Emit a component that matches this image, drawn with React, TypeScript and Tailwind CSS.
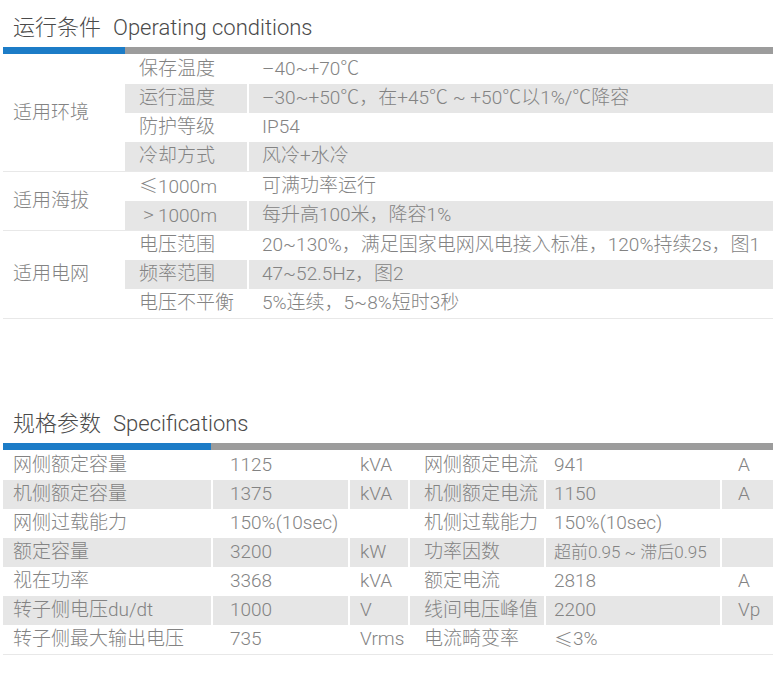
const font = { fontFamily: '"Roboto", "Noto Sans CJK SC", sans-serif' };

function Sym({ c }: { c: string }) {
  return (
    <span className="inline-block w-[19px] text-center" style={{ fontFamily: '"Noto Sans CJK SC", sans-serif' }}>
      {c}
    </span>
  );
}

const conditions = [
  {
    group: '适用环境',
    rows: [
      ['保存温度', '–40~+70℃'],
      ['运行温度', '–30~+50℃，在+45℃ ~ +50℃以1%/℃降容'],
      ['防护等级', 'IP54'],
      ['冷却方式', '风冷+水冷'],
    ],
  },
  {
    group: '适用海拔',
    rows: [
      ['≤', '可满功率运行'],
      ['>', '每升高100米，降容1%'],
    ],
  },
  {
    group: '适用电网',
    rows: [
      ['电压范围', '20~130%，满足国家电网风电接入标准，120%持续2s，图1'],
      ['频率范围', '47~52.5Hz，图2'],
      ['电压不平衡', '5%连续，5~8%短时3秒'],
    ],
  },
];

const specs = [
  ['网侧额定容量', '1125', 'kVA', '网侧额定电流', '941', 'A'],
  ['机侧额定容量', '1375', 'kVA', '机侧额定电流', '1150', 'A'],
  ['网侧过载能力', '150%(10sec)', '', '机侧过载能力', '150%(10sec)', ''],
  ['额定容量', '3200', 'kW', '功率因数', '超前0.95 ~ 滞后0.95', ''],
  ['视在功率', '3368', 'kVA', '额定电流', '2818', 'A'],
  ['转子侧电压du/dt', '1000', 'V', '线间电压峰值', '2200', 'Vp'],
  ['转子侧最大输出电压', '735', 'Vrms', '电流畸变率', '≤3%', ''],
];

function SectionTitle({ zh, en, blue }: { zh: string; en: string; blue: string }) {
  return (
    <div>
      <div className="pl-[10px] text-[22px] leading-[22px] font-light text-[#4a4a4a]">
        {zh}
        <span className="ml-[12px]">{en}</span>
      </div>
      <div className="mt-[8px] flex h-[7px]">
        <div className={`${blue} bg-[#1c7cc7]`} />
        <div className="flex-1 bg-[#9c9c9c]" />
      </div>
    </div>
  );
}

function SubLabel({ text }: { text: string }) {
  if (text === '≤' || text === '>') {
    return (
      <>
        <Sym c={text} />
        1000m
      </>
    );
  }
  return <>{text}</>;
}

export default function App() {
  return (
    <div className="min-h-screen w-[776px] bg-white px-[3px] pt-[17px] text-[#838383] font-light" style={font}>
      <SectionTitle zh="运行条件" en="Operating conditions" blue="w-[122px]" />
      <div className="mt-[1px] text-[19px]">
        {conditions.map((g) => (
          <div key={g.group} className="flex border-b border-[#e8e8e8]">
            <div className="flex w-[122px] items-center pl-[10px]">{g.group}</div>
            <div className="flex-1">
              {g.rows.map((r, i) => (
                <div key={r[0]} className={`flex h-[29px] items-center ${i % 2 === 1 ? 'bg-[#e6e6e6]' : ''}`}>
                  <div className="w-[122px] pl-[14px] whitespace-nowrap">
                    <SubLabel text={r[0]} />
                  </div>
                  <div className="flex h-full flex-1 items-center border-l-2 border-white pl-[13px] whitespace-nowrap">
                    {r[1]}
                  </div>
                </div>
              ))}
            </div>
          </div>
        ))}
      </div>

      <div className="mt-[94px]">
        <SectionTitle zh="规格参数" en="Specifications" blue="w-[208px]" />
      </div>
      <div className="mt-[1px] border-b border-[#e8e8e8] text-[19px]">
        {specs.map((r, i) => (
          <div
            key={r[0]}
            className={`grid h-[29px] grid-cols-[208px_137px_60px_136px_176px_52px] whitespace-nowrap ${i % 2 === 1 ? 'bg-[#e6e6e6]' : ''}`}
          >
            <div className="flex items-center pl-[10px]">{r[0]}</div>
            <div className="flex items-center border-l-2 border-white pl-[17px]">{r[1]}</div>
            <div className="flex items-center border-l-2 border-white pl-[10px]">{r[2]}</div>
            <div className="flex items-center border-l-2 border-white pl-[14px]">{r[3]}</div>
            <div className={`flex items-center border-l-2 border-white pl-[8px] ${r[4].startsWith('超前') ? 'text-[17px]' : ''}`}>
              {r[4].startsWith('≤') ? (
                <>
                  <Sym c="≤" />
                  3%
                </>
              ) : (
                r[4]
              )}
            </div>
            <div className="flex items-center border-l-2 border-white pl-[16px]">{r[5]}</div>
          </div>
        ))}
      </div>
    </div>
  );
}
